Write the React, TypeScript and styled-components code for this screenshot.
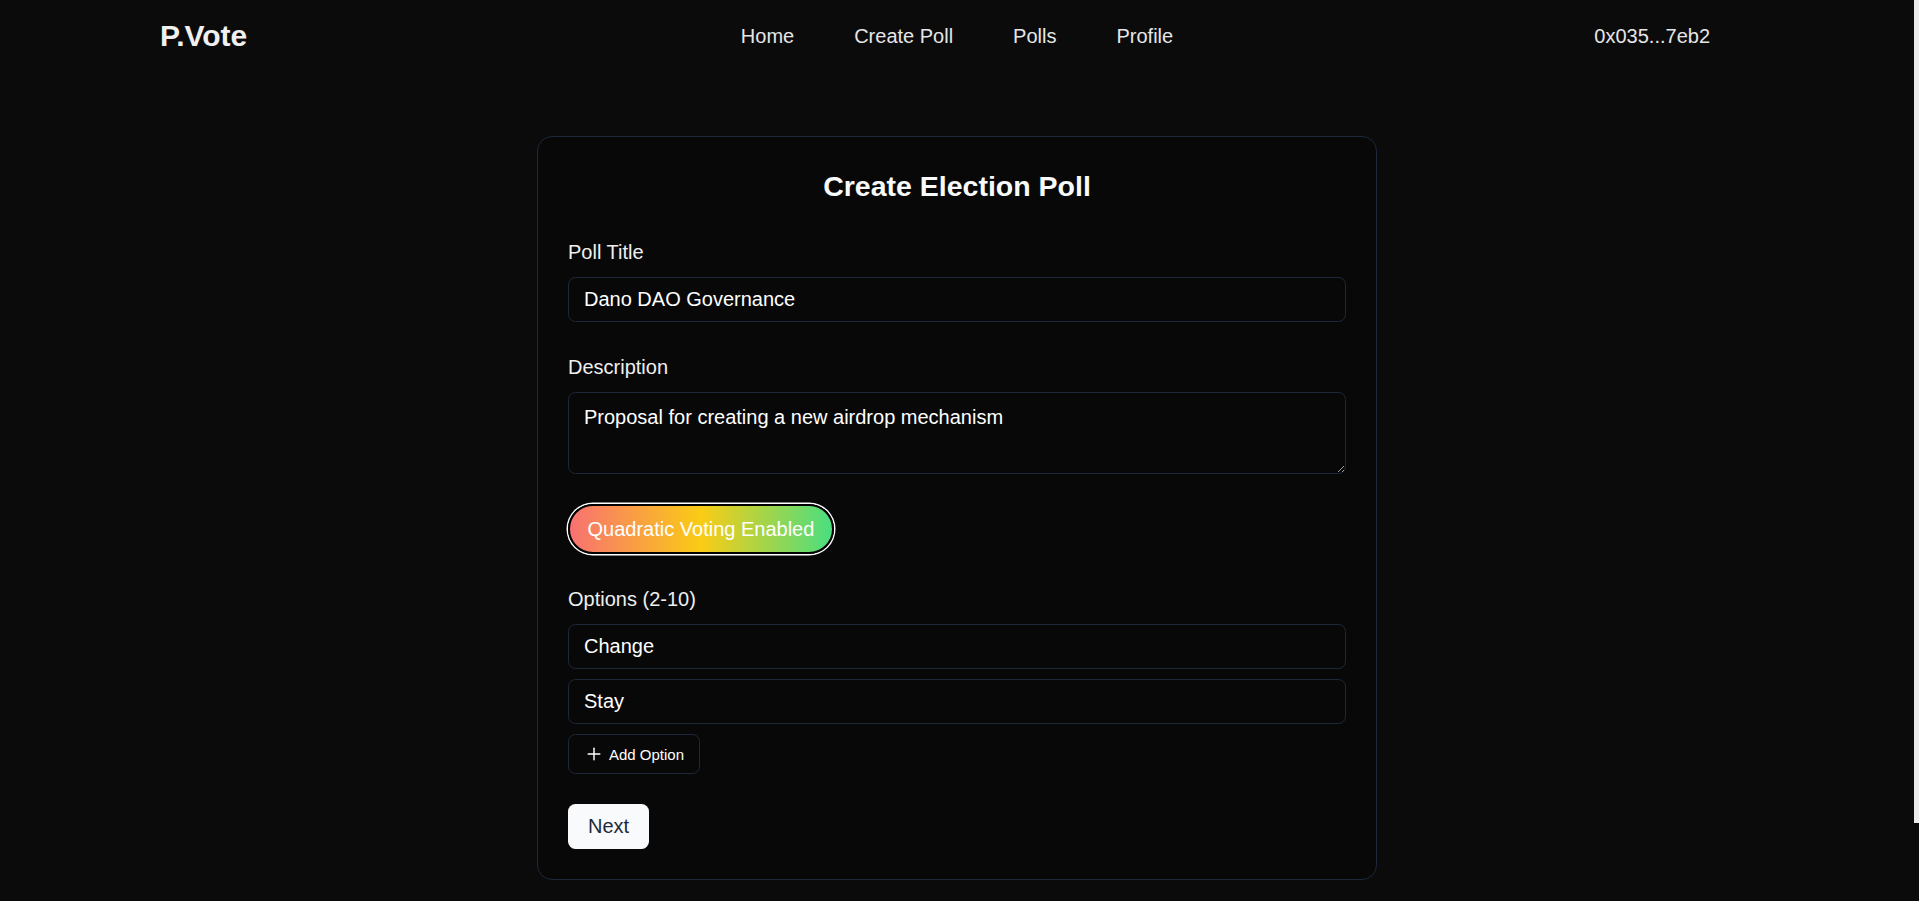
import React from "react";
import styled, { createGlobalStyle } from "styled-components";
import { Plus } from "lucide-react";

const GlobalStyle = createGlobalStyle`
  html, body {
    margin: 0;
    padding: 0;
    background: #0b0b0b;
    font-family: "Liberation Sans", Arial, Helvetica, sans-serif;
    color: #f2f2f2;
  }
  * { box-sizing: border-box; }
  ::-webkit-scrollbar { width: 5px; }
  ::-webkit-scrollbar-track { background: #0b0b0b; }
  ::-webkit-scrollbar-thumb { background: #ececec; }
`;

const Page = styled.div`
  min-height: 100vh;
  background: #0b0b0b;
  padding-right: 5px;
  padding-bottom: 106px;
`;

const ScrollThumb = styled.div`
  position: fixed;
  top: 0;
  right: 0;
  width: 5px;
  height: 823px;
  background: #ececec;
  z-index: 10;
`;

const NavBar = styled.header`
  height: 72px;
  display: grid;
  grid-template-columns: 1fr auto 1fr;
  align-items: center;
  padding: 0 157px;
`;

const Logo = styled.div`
  font-size: 30px;
  font-weight: 700;
  color: #f0f0f0;
  margin-left: 3px;
  justify-self: start;
`;

const NavLinks = styled.nav`
  display: flex;
  align-items: center;
  gap: 60px;
`;

const NavLink = styled.a`
  font-size: 20px;
  color: #e6e6e6;
  text-decoration: none;
  cursor: pointer;
`;

const Wallet = styled.div`
  justify-self: end;
  margin-right: 47px;
  font-size: 20px;
  color: #e6e6e6;
`;

const Main = styled.main`
  padding-top: 64px;
  display: flex;
  justify-content: center;
`;

const Card = styled.section`
  width: 840px;
  border: 1px solid #1e293b;
  border-radius: 15px;
  padding: 30px;
  background: #080808;
`;

const Title = styled.h2`
  margin: 1px 0 33px;
  font-size: 28.5px;
  line-height: 36px;
  font-weight: 700;
  text-align: center;
  color: #f8fafc;
`;

const Form = styled.form`
  display: flex;
  flex-direction: column;
  gap: 30px;
`;

const Field = styled.div`
  display: flex;
  flex-direction: column;
  gap: 10px;
  align-items: stretch;
`;

const Label = styled.label`
  font-size: 20px;
  line-height: 30px;
  color: #efefef;
`;

const TextInput = styled.input`
  height: 45px;
  width: 100%;
  border: 1px solid #1e293b;
  border-radius: 7.5px;
  padding: 0 15px;
  background: transparent;
  color: #ffffff;
  font-family: inherit;
  font-size: 20px;
  outline: none;
`;

const TextArea = styled.textarea`
  height: 82px;
  width: 100%;
  border: 1px solid #1e293b;
  border-radius: 7.5px;
  padding: 9px 15px;
  background: transparent;
  color: #ffffff;
  font-family: inherit;
  font-size: 20px;
  line-height: 30px;
  outline: none;
  resize: vertical;
  color-scheme: dark;
`;

const QuadraticToggle = styled.button`
  align-self: flex-start;
  height: 50px;
  padding: 0 17.5px;
  border: 2px solid #000;
  border-radius: 999px;
  box-shadow: 0 0 0 1.5px #ffffff;
  background: linear-gradient(to right, #f87171, #facc15, #4ade80);
  color: #ffffff;
  font-family: inherit;
  font-size: 20px;
  cursor: pointer;
`;

const AddButton = styled.button`
  align-self: flex-start;
  height: 40px;
  display: inline-flex;
  align-items: center;
  gap: 5px;
  padding: 0 15px;
  border: 1px solid #1e293b;
  border-radius: 7.5px;
  background: transparent;
  color: #ffffff;
  font-family: inherit;
  font-size: 15px;
  cursor: pointer;
`;

const NextButton = styled.button`
  align-self: flex-start;
  height: 45px;
  padding: 0 20px;
  border: none;
  border-radius: 7.5px;
  background: #f8fafc;
  color: #1e293b;
  font-family: inherit;
  font-size: 20px;
  cursor: pointer;
`;

const Actions = styled.div`
  display: flex;
`;

export default function App() {
  const options = ["Change", "Stay"];
  return (
    <Page>
      <GlobalStyle />
      <ScrollThumb />
      <NavBar>
        <Logo>P.Vote</Logo>
        <NavLinks>
          <NavLink>Home</NavLink>
          <NavLink>Create Poll</NavLink>
          <NavLink>Polls</NavLink>
          <NavLink>Profile</NavLink>
        </NavLinks>
        <Wallet>0x035...7eb2</Wallet>
      </NavBar>
      <Main>
        <Card>
          <Title>Create Election Poll</Title>
          <Form onSubmit={(e) => e.preventDefault()}>
            <Field>
              <Label>Poll Title</Label>
              <TextInput defaultValue="Dano DAO Governance" />
            </Field>
            <Field>
              <Label>Description</Label>
              <TextArea defaultValue="Proposal for creating a new airdrop mechanism" />
            </Field>
            <QuadraticToggle type="button">Quadratic Voting Enabled</QuadraticToggle>
            <Field>
              <Label>Options (2-10)</Label>
              {options.map((o) => (
                <TextInput key={o} defaultValue={o} />
              ))}
              <AddButton type="button">
                <Plus size={20} strokeWidth={1.75} />
                Add Option
              </AddButton>
            </Field>
            <Actions>
              <NextButton type="submit">Next</NextButton>
            </Actions>
          </Form>
        </Card>
      </Main>
    </Page>
  );
}
